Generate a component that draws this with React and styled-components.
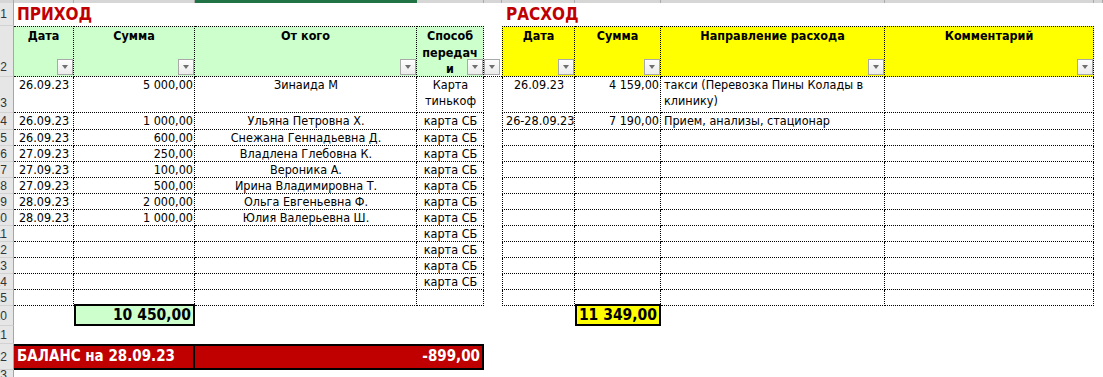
import React from 'react';
import styled, { createGlobalStyle } from 'styled-components';

const GlobalStyle = createGlobalStyle`
  html, body {
    margin: 0;
    padding: 0;
    background: #ffffff;
  }
  body {
    font-family: "DejaVu Sans Condensed", "DejaVu Sans", sans-serif;
    font-stretch: condensed;
    color: #000000;
  }
`;

const W = { rh: 14, a: 60, b: 121, c: 222, d: 67, e: 18, f: 73, g: 86, h: 224, i: 209 };
const GREEN = '#ccffcc';
const YELLOW = '#ffff00';
const RED = '#c00000';

const income = [
    ['26.09.23', '1 000,00', 'Ульяна Петровна Х.', 'карта СБ'],
    ['26.09.23', '600,00', 'Снежана Геннадьевна Д.', 'карта СБ'],
    ['27.09.23', '250,00', 'Владлена Глебовна К.', 'карта СБ'],
    ['27.09.23', '100,00', 'Вероника А.', 'карта СБ'],
    ['27.09.23', '500,00', 'Ирина Владимировна Т.', 'карта СБ'],
    ['28.09.23', '2 000,00', 'Ольга Евгеньевна Ф.', 'карта СБ'],
    ['28.09.23', '1 000,00', 'Юлия Валерьевна Ш.', 'карта СБ'],
    ['', '', '', 'карта СБ'],
    ['', '', '', 'карта СБ'],
    ['', '', '', 'карта СБ'],
    ['', '', '', 'карта СБ'],
    ['', '', '', ''],
];

const expense = [
    ['26-28.09.23', '7 190,00', 'Прием, анализы, стационар', ''],
];

export default function App() {

    // rows 4..15 share the same height, row 4 is a pixel taller
    const rows = income.map((r, i) => ({
        n: i + 4,
        h: i === 0 ? 17 : 16,
        left: r,
        right: expense[i] || ['', '', '', ''],
    }));

    return (
        <>
            <GlobalStyle />
            <Sheet>
                <ColHeads>
                    {Object.keys(W).map(k => <ColHead key={k} $w={W[k]} $active={k === 'c'} />)}
                    <ColHead $fill />
                </ColHeads>

                <Row $h={23}>
                    <RowHead>1</RowHead>
                    <Title $w={W.a + W.b + W.c + W.d + W.e} $pl={3}>ПРИХОД</Title>
                    <Title $w={W.f + W.g} $pl={4}>РАСХОД</Title>
                </Row>

                <Row $h={51}>
                    <RowHead $tall>2</RowHead>
                    <HeadCell $w={W.a} $bg={GREEN}>Дата<Filter /></HeadCell>
                    <HeadCell $w={W.b} $bg={GREEN}>Сумма<Filter /></HeadCell>
                    <HeadCell $w={W.c} $bg={GREEN}>От кого<Filter /></HeadCell>
                    <HeadCell $w={W.d} $bg={GREEN}>Способ<br />передач<br />и<Filter /></HeadCell>
                    <Spacer $w={W.e} $under><Filter $r={2} /></Spacer>
                    <HeadCell $w={W.f} $bg={YELLOW} $first>Дата<Filter /></HeadCell>
                    <HeadCell $w={W.g} $bg={YELLOW}>Сумма<Filter /></HeadCell>
                    <HeadCell $w={W.h} $bg={YELLOW}>Направление расхода<Filter /></HeadCell>
                    <HeadCell $w={W.i} $bg={YELLOW}>Комментарий<Filter /></HeadCell>
                </Row>

                <Row $h={36}>
                    <RowHead $tall>3</RowHead>
                    <Cell $w={W.a} $align="center">26.09.23</Cell>
                    <Cell $w={W.b} $align="right" $pr={1}>5 000,00</Cell>
                    <Cell $w={W.c} $align="center">Зинаида М</Cell>
                    <Cell $w={W.d} $align="center" $wrap>Карта тинькоф</Cell>
                    <Spacer $w={W.e} />
                    <Cell $w={W.f} $align="center" $first>26.09.23</Cell>
                    <Cell $w={W.g} $align="right" $pr={1}>4 159,00</Cell>
                    <Cell $w={W.h} $wrap>такси (Перевозка Пины Колады в клинику)</Cell>
                    <Cell $w={W.i}></Cell>
                </Row>

                {rows.map(r => (
                    <Row key={r.n} $h={r.h}>
                        <RowHead>{r.n}</RowHead>
                        <Cell $w={W.a} $align="center">{r.left[0]}</Cell>
                        <Cell $w={W.b} $align="right" $pr={1}>{r.left[1]}</Cell>
                        <Cell $w={W.c} $align="center">{r.left[2]}</Cell>
                        <Cell $w={W.d} $align="center">{r.left[3]}</Cell>
                        <Spacer $w={W.e} />
                        <Cell $w={W.f} $align="center" $first>{r.right[0]}</Cell>
                        <Cell $w={W.g} $align="right" $pr={1}>{r.right[1]}</Cell>
                        <Cell $w={W.h}>{r.right[2]}</Cell>
                        <Cell $w={W.i}>{r.right[3]}</Cell>
                    </Row>
                ))}

                <Row $h={20}>
                    <RowHead>20</RowHead>
                    <Spacer $w={W.a} />
                    <Total $w={W.b} $bg={GREEN}>10 450,00</Total>
                    <Spacer $w={W.c + W.d + W.e + W.f} />
                    <Total $w={W.g} $bg={YELLOW}>11 349,00</Total>
                </Row>

                <Row $h={18}>
                    <RowHead>21</RowHead>
                </Row>

                <Row $h={26}>
                    <RowHead>22</RowHead>
                    <Balance $w={W.a + W.b} $pl={3}>БАЛАНС на 28.09.23</Balance>
                    <Balance $w={W.c + W.d} $align="right" $pr={2}>-899,00</Balance>
                </Row>

                <Row $h={10}>
                    <RowHead>23</RowHead>
                </Row>
            </Sheet>
        </>
    );
}

const Sheet = styled.div`
    width: 1103px;
    height: 377px;
    overflow: hidden;
    display: flex;
    flex-direction: column;
    background: #ffffff;
`;

const ColHeads = styled.div`
    display: flex;
    flex: none;
    height: 3px;
`;

const ColHead = styled.div`
    flex: ${p => p.$fill ? '1' : 'none'};
    width: ${p => p.$w ? p.$w + 'px' : 'auto'};
    box-sizing: border-box;
    height: 3px;
    background: ${p => p.$active ? '#217346' : '#d6d6d6'};
    border-right: 1px solid ${p => p.$active ? '#217346' : '#ababab'};
`;

const Row = styled.div`
    display: flex;
    flex: none;
    height: ${p => p.$h}px;
`;

const RowHead = styled.div`
    flex: none;
    width: 14px;
    height: 100%;
    box-sizing: border-box;
    background: #e6e6e6;
    border-right: 1px solid #a6a6a6;
    border-bottom: 1px solid #d2d2d2;
    display: flex;
    justify-content: flex-end;
    align-items: ${p => p.$tall ? 'flex-end' : 'center'};
    padding: 0 6px ${p => p.$tall ? '2px' : '0'} 0;
    overflow: hidden;
    font-family: "Liberation Sans", sans-serif;
    font-stretch: normal;
    font-size: 12px;
    line-height: 14px;
    color: #333333;
`;

const Title = styled.div`
    flex: none;
    width: ${p => p.$w}px;
    box-sizing: border-box;
    padding-left: ${p => p.$pl}px;
    font-size: 17px;
    font-weight: 700;
    line-height: 23px;
    color: ${RED};
    white-space: nowrap;
`;

const Spacer = styled.div`
    flex: none;
    width: ${p => p.$w}px;
    height: 100%;
    box-sizing: border-box;
    position: relative;
    ${p => p.$under && 'border-bottom: 1px dotted #000000;'}
`;

const Cell = styled.div`
    flex: none;
    width: ${p => p.$w}px;
    height: 100%;
    box-sizing: border-box;
    border-right: 1px dotted #000000;
    border-bottom: 1px dotted #000000;
    ${p => p.$first && 'border-left: 1px dotted #000000;'}
    padding: 0 ${p => p.$pr ?? 2}px 0 ${p => p.$pl ?? 3}px;
    font-size: 12.5px;
    line-height: 16px;
    text-align: ${p => p.$align || 'left'};
    white-space: ${p => p.$wrap ? 'normal' : 'nowrap'};
    overflow: hidden;
`;

const HeadCell = styled(Cell)`
    position: relative;
    overflow: visible;
    border-top: 1px dotted #000000;
    background: ${p => p.$bg};
    font-weight: 700;
    font-size: 12.5px;
    line-height: 16.5px;
    text-align: center;
    white-space: normal;
    padding: 1px 2px 0;
`;

const Filter = styled.span`
    position: absolute;
    right: ${p => p.$r ?? 0}px;
    bottom: 1px;
    width: 16px;
    height: 16px;
    box-sizing: border-box;
    border: 1px solid #a9a9a9;
    background: linear-gradient(#fdfdfd, #ebebeb);
    display: flex;
    align-items: center;
    justify-content: center;

    &::after {
        content: '';
        width: 0;
        height: 0;
        border-left: 3.5px solid transparent;
        border-right: 3.5px solid transparent;
        border-top: 4px solid #6f6f6f;
    }
`;

const Total = styled.div`
    flex: none;
    width: ${p => p.$w}px;
    height: 22px;
    margin-top: -2px;
    box-sizing: border-box;
    border: 2px solid #000000;
    background: ${p => p.$bg};
    padding-right: 2px;
    font-size: 15.5px;
    font-weight: 700;
    line-height: 18px;
    text-align: right;
    white-space: nowrap;
`;

const Balance = styled.div`
    flex: none;
    width: ${p => p.$w}px;
    height: 100%;
    box-sizing: border-box;
    border-top: 2px solid #000000;
    border-bottom: 2px solid #000000;
    border-right: 2px solid #000000;
    background: ${RED};
    color: #ffffff;
    padding: 0 ${p => p.$pr ?? 0}px 0 ${p => p.$pl ?? 0}px;
    font-size: 15px;
    font-weight: 700;
    line-height: 21px;
    text-align: ${p => p.$align || 'left'};
    white-space: nowrap;
`;
